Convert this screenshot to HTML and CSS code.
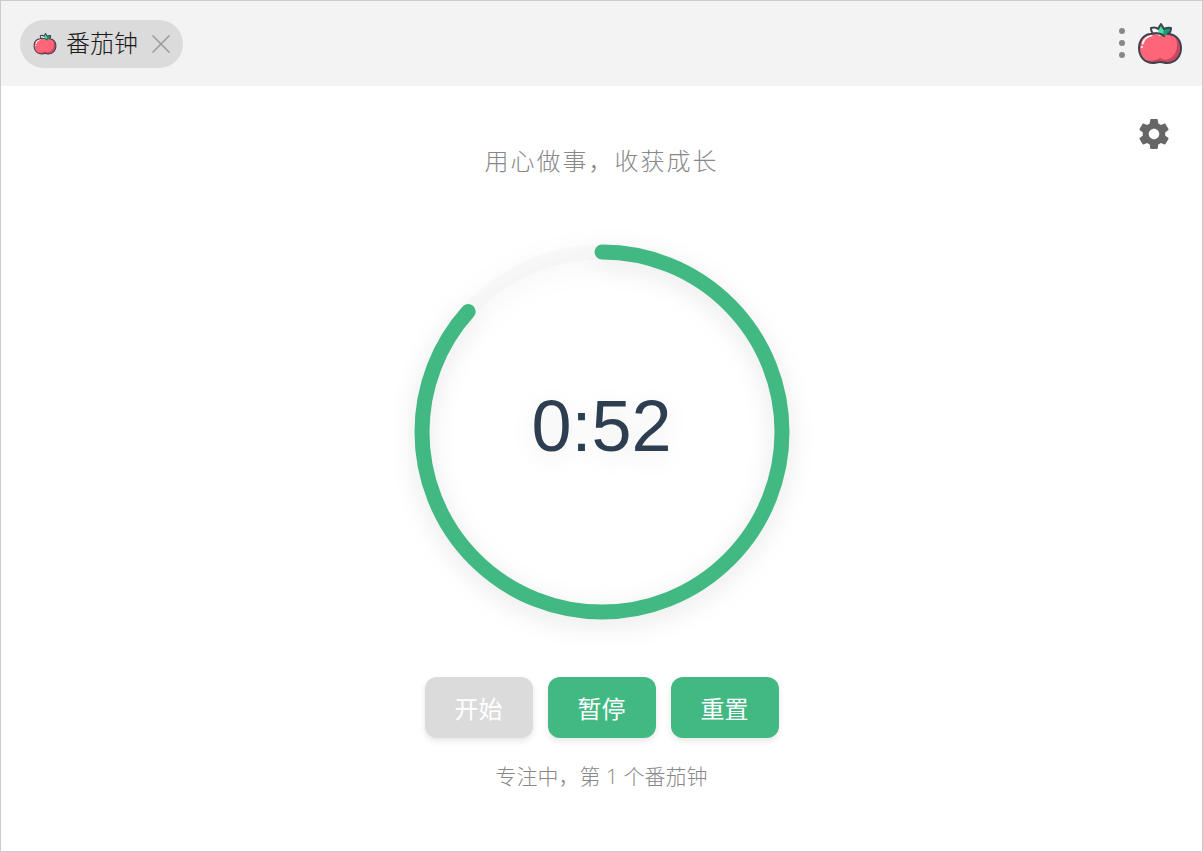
FILE: index.html
```html
<!DOCTYPE html>
<html lang="zh-CN">
<head>
    <meta charset="UTF-8">
    <meta name="viewport" content="width=device-width, initial-scale=1.0">
    <title>番茄钟</title>
    <link rel="stylesheet" href="styles.css">
</head>
<body>
<svg class="sprite" aria-hidden="true">
    <symbol id="tomato" viewBox="0 0 46 46">
        <path d="M23 15C19 12 15 13 13 13 6 14 2 20 2 27c0 9 6 15 14 15 3 0 4-1 7-1s4 1 7 1c8 0 14-6 14-15 0-8-5-13-12-14-3 0-6 0-9 2z" fill="#ff6578"/>
        <path d="M38 15c4 9 2 19-6 23-3 1-5 1-7 0l-2-1-2 1c-3 2-8 2-12 1 2 2 5 3 7 3 3 0 4-1 7-1s4 1 7 1c8 0 14-6 14-15 0-5-2-9-6-12z" fill="#cb465f"/>
        <path d="M5 22c1-4 4-7 9-8l2 1c-5 1-8 3-9 7-1 2-2 2-2 0z" fill="#fff"/>
        <circle cx="5" cy="26" r="1" fill="#fff"/>
        <path d="M14 7c3-1 5-1 7 1l3-5 3 5c2-1 4-2 7-1 0 3-1 5-3 6-2 2-5 2-8 1-2-3-6-2-8-3-1-1-1-3-1-4z" fill="#169b76"/>
        <path d="M24 3l3 5-1 6-4-2-1-4z" fill="#4edba0"/>
        <path d="M14 7c3-1 5-1 7 1l1 4c-2-1-5-1-7-1-1-1-1-3-1-4z" fill="#f4f7f5"/>
        <path d="M27 15c-3-3-9-3-14-2C6 14 2 20 2 27c0 9 6 15 14 15 3 0 4-1 7-1s4 1 7 1c8 0 14-6 14-15 0-8-5-13-12-14M15 11c-1-1-1-3-1-4 3-1 5-1 7 1l3-5 3 5c2-1 4-2 7-1 0 3-1 5-3 6" fill="none" stroke="#3d4350" stroke-width="2" stroke-linecap="round" stroke-linejoin="round"/>
    </symbol>
</svg>
<div class="window">
    <header class="titlebar">
        <div class="tab">
            <svg class="tab-icon" aria-hidden="true"><use href="#tomato"/></svg>
            <span>番茄钟</span>
            <button class="tab-close" type="button" aria-label="关闭">
                <svg width="20" height="20" viewBox="0 0 20 20"><path d="M1.500 1.500l17 17M18.500 1.500l-17 17" fill="none" stroke="#999" stroke-width="1.500"/></svg>
            </button>
        </div>
        <div class="actions">
            <button class="menu" type="button" aria-label="菜单">
                <svg width="8" height="32" viewBox="0 0 8 32" fill="#888">
                    <circle cx="4" cy="3" r="3"/>
                    <circle cx="4" cy="15" r="3"/>
                    <circle cx="4" cy="27" r="3"/>
                </svg>
            </button>
            <svg class="logo" aria-hidden="true"><use href="#tomato"/></svg>
        </div>
    </header>
    <main class="content">
        <div class="toolbar">
            <button class="settings" type="button" aria-label="设置">
                <svg width="36" height="36" viewBox="0 0 24 24" fill="#666"><path d="M19.43 12.98c.04-.32.07-.64.07-.98s-.03-.66-.07-.98l2.11-1.65c.19-.15.24-.42.12-.64l-2-3.46c-.12-.22-.39-.3-.61-.22l-2.49 1c-.52-.4-1.08-.73-1.69-.98l-.38-2.65C14.46 2.18 14.25 2 14 2h-4c-.25 0-.46.18-.49.42l-.38 2.65c-.61.25-1.17.59-1.69.98l-2.49-1c-.23-.09-.49 0-.61.22l-2 3.46c-.13.22-.07.49.12.64l2.11 1.65c-.04.32-.07.65-.07.98s.03.66.07.98l-2.11 1.65c-.19.15-.24.42-.12.64l2 3.46c.12.22.39.3.61.22l2.49-1c.52.4 1.08.73 1.69.98l.38 2.65c.03.24.24.42.49.42h4c.25 0 .46-.18.49-.42l.38-2.65c.61-.25 1.17-.59 1.69-.98l2.49 1c.23.09.49 0 .61-.22l2-3.46c.12-.22.07-.49-.12-.64l-2.11-1.65zM12 15.500c-1.930 0-3.500-1.570-3.500-3.500s1.570-3.500 3.500-3.500 3.500 1.570 3.500 3.500-1.570 3.500-3.500 3.500z"/></svg>
            </button>
        </div>
        <p class="slogan">用心做事，收获成长</p>
        <div class="timer">
            <svg class="ring" viewBox="0 0 376 376" aria-hidden="true">
                <circle class="ring-track" cx="188" cy="188" r="180"/>
                <!-- one unit of path length per second -->
                <circle class="ring-progress" cx="188" cy="188" r="180" pathLength="60" stroke-dasharray="52 60" transform="rotate(-90 188 188)"/>
            </svg>
            <span class="time">0:52</span>
        </div>
        <div class="controls">
            <button class="btn" type="button" disabled>开始</button>
            <button class="btn" type="button">暂停</button>
            <button class="btn" type="button">重置</button>
        </div>
        <p class="status">专注中，第 1 个番茄钟</p>
    </main>
</div>
</body>
</html>
```
FILE: styles.css
```css
* {
    box-sizing: border-box;
}

body {
    margin: 0;
    font-family: "Liberation Sans", "Noto Sans CJK SC", sans-serif;
    background-color: #fff;
}

button {
    padding: 0;
    border: none;
    background: none;
    font-family: inherit;
    cursor: pointer;
}

svg {
    display: block;
}

p {
    margin: 0;
}

.sprite {
    display: none;
}

.window {
    min-height: 100vh;
    border: 1px solid #ccc;
}

.titlebar {
    display: flex;
    justify-content: space-between;
    align-items: center;
    height: 85px;
    padding: 0 19px;
    background-color: #f3f3f3;
}

.tab {
    display: flex;
    align-items: center;
    height: 48px;
    padding: 0 12px;
    border-radius: 24px;
    background-color: #dbdbdb;
    color: #1a1a1a;
    font-size: 24px;
    font-weight: 300;
    line-height: 32px;
}

.tab-icon {
    width: 26px;
    height: 24px;
    margin-right: 8px;
}

.tab-close {
    margin-left: 13px;
}

.actions {
    display: flex;
    align-items: center;
    gap: 11px;
}

.logo {
    width: 46px;
    height: 46px;
}

.content {
    display: flex;
    flex-direction: column;
    align-items: center;
    padding-bottom: 32px;
}

.toolbar {
    display: flex;
    align-self: flex-end;
    padding: 30px 30px 0 0;
}

.slogan {
    color: #888;
    font-size: 24px;
    font-weight: 300;
    line-height: 20px;
    letter-spacing: 2px;
}

/* ring and time share one grid cell */
.timer {
    display: grid;
    place-items: center;
    margin-top: 72px;
}

.ring,
.time {
    grid-area: 1 / 1;
}

.ring {
    width: 376px;
    overflow: visible;
    filter: drop-shadow(0 6px 12px rgba(0, 0, 0, 0.1));
}

.ring circle {
    fill: none;
    stroke-width: 15px;
}

.ring-track {
    stroke: rgba(240, 240, 240, 0.4);
}

.ring .ring-progress {
    stroke: #42b983;
    stroke-linecap: round;
}

.time {
    padding-bottom: 12px;
    color: #2c3e50;
    font-size: 72px;
    line-height: 80px;
    text-shadow: 0 6px 24px rgba(0, 0, 0, 0.1);
}

.controls {
    display: flex;
    gap: 15px;
    margin-top: 57px;
}

.btn {
    width: 108px;
    height: 61px;
    border-radius: 12px;
    background-color: #42b983;
    box-shadow: 0 3px 6px rgba(0, 0, 0, 0.1);
    color: #fff;
    font-size: 24px;
}

.btn:disabled {
    background-color: #dbdbdb;
    cursor: default;
}

.status {
    margin-top: 22px;
    color: #888;
    font-family: "Open Sans", "Noto Sans CJK SC", sans-serif;
    font-size: 21px;
    font-weight: 300;
    line-height: 32px;
}
```
